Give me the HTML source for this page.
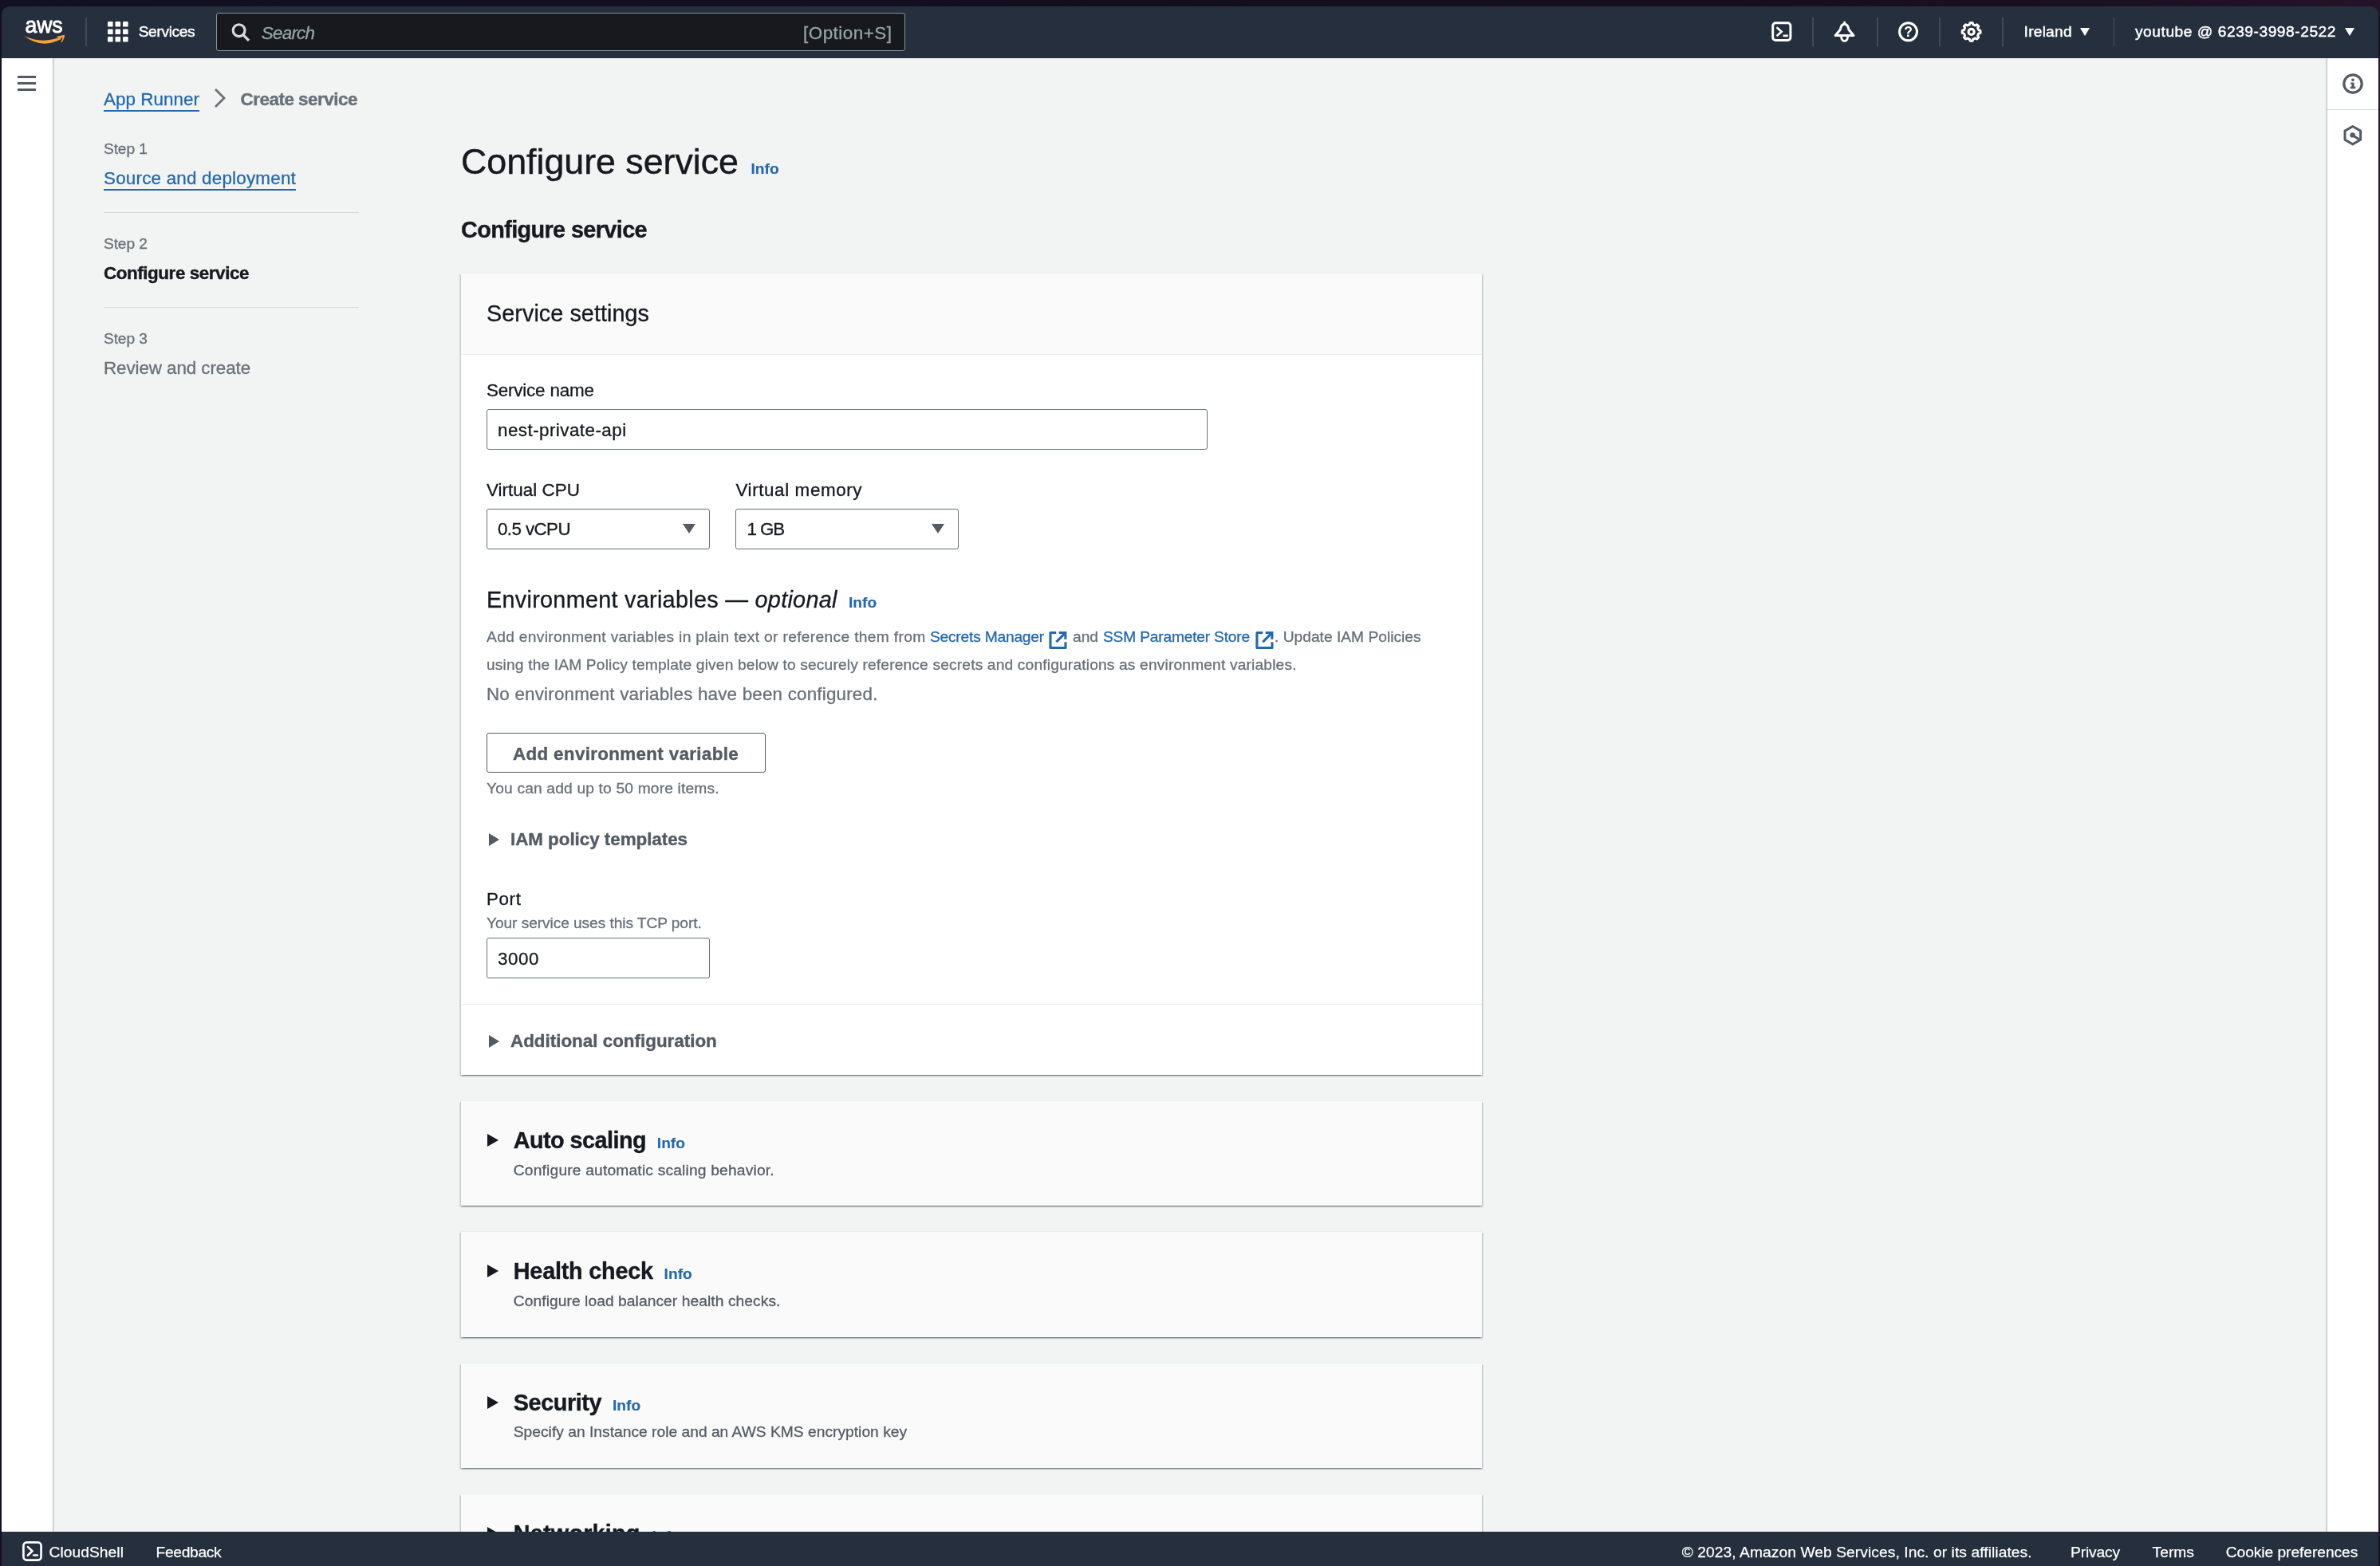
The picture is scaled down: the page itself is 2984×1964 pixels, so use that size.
<!DOCTYPE html>
<html lang="en">
<head>
<meta charset="utf-8">
<title>App Runner - Create service</title>
<style>
*{box-sizing:border-box;margin:0;padding:0}
html,body{width:2984px;height:1964px;overflow:hidden}
body{background:linear-gradient(90deg,#121022 0%,#130e1e 50%,#170e1e 75%,#1c1023 90%,#241429 100%);font-family:"Liberation Sans",Arial,sans-serif;color:#16191f;font-size:22.4px;position:relative}
#win{will-change:transform;position:absolute;left:0;top:0;width:2984px;height:1964px;clip-path:inset(8px 2px 0 2px round 10px 10px 0 0);background:#f2f3f3;overflow:hidden}
.t{position:absolute;left:calc(var(--x)*1px);top:calc(var(--cy)*1px - 20px);line-height:40px;white-space:nowrap}
.abs{position:absolute}
.t{-webkit-text-stroke:0.3px}
.b{font-weight:bold;-webkit-text-stroke:0.4px}
.info{-webkit-text-stroke:0.15px}
.f19{font-size:19.2px}
.f22{font-size:22.4px}
.f25{font-size:22.4px}
.f28{font-size:28.8px}
.gray{color:#687078}
.dgray{color:#545b64}
.link{color:#2368b1}
.info{color:#2368b1;font-weight:bold;font-size:19.2px}
/* nav */
#nav{position:absolute;left:0;top:0;width:2984px;height:73px;border-bottom:1px solid #222d3b;background:#252f3d}
#nav .t{color:#fff;font-size:19.2px;-webkit-text-stroke:0.45px #fff}
.vsep{position:absolute;top:22px;width:2px;height:36px;background:#444a55}
#search{position:absolute;left:271px;top:16px;width:864px;height:48px;border:1px solid #879596;border-radius:3px;background:#18191e}
/* side strips */
#lstrip{position:absolute;left:0;top:73px;width:66px;height:1848px;background:#fff;box-shadow:1px 0 2px rgba(0,28,36,.3)}
#rstrip{position:absolute;left:2918px;top:73px;width:66px;height:1848px;background:#fff;box-shadow:-1px 0 2px rgba(0,28,36,.3)}
#foot{position:absolute;left:0;top:1921px;width:2984px;height:43px;background:#252f3d}
#foot .t{color:#fff;font-size:19.2px;-webkit-text-stroke:0.25px #fff}
/* cards */
.card{position:absolute;left:578px;width:1280px;background:#fff;border-top:1px solid #eaeded;box-shadow:0 1.6px 1.6px 0 rgba(0,28,36,.3),1.6px 1.6px 1.6px 0 rgba(0,28,36,.15),-1.6px 1.6px 1.6px 0 rgba(0,28,36,.15)}
.card.hd{background:#fafafa}
.inp{position:absolute;height:51px;border:1px solid #687078;border-radius:3px;background:#fff}
.tri{position:absolute;width:0;height:0;border-style:solid}
.hr{position:absolute;height:1px;background:#eaeded}
</style>
<style id="ls">
#bc1{letter-spacing:0.050px}
#bc2{letter-spacing:-0.473px}
#st1{letter-spacing:-0.131px}
#st2{letter-spacing:-0.131px}
#st3{letter-spacing:-0.131px}
#st1n{letter-spacing:0.214px}
#st2n{letter-spacing:-0.420px}
#st3n{letter-spacing:-0.085px}
#h1{letter-spacing:-0.034px}
#h2{letter-spacing:-0.604px}
#c1h{letter-spacing:0.046px}
#l1{letter-spacing:-0.184px}
#v1{letter-spacing:0.454px}
#l2{letter-spacing:0.040px}
#l3{letter-spacing:0.617px}
#v2{letter-spacing:-0.604px}
#v3{letter-spacing:-1.133px}
#envh{letter-spacing:0.285px}
#d1a{letter-spacing:0.330px}
#d1b{letter-spacing:-0.201px}
#d1c{letter-spacing:-0.005px}
#d1d{letter-spacing:-0.194px}
#d1e{letter-spacing:0.008px}
#d2{letter-spacing:0.159px}
#noenv{letter-spacing:0.193px}
#btn{letter-spacing:0.334px}
#cap{letter-spacing:0.174px}
#iam{letter-spacing:-0.036px}
#l4{letter-spacing:0.605px}
#l4d{letter-spacing:-0.093px}
#v4{letter-spacing:0.547px}
#addc{letter-spacing:0.003px}
#c2h{letter-spacing:-0.550px}
#c2d{letter-spacing:0.190px}
#c3h{letter-spacing:-0.223px}
#c3d{letter-spacing:0.078px}
#c4h{letter-spacing:-0.420px}
#c4d{letter-spacing:0.023px}
#c5h{letter-spacing:0.200px}
#nsv{letter-spacing:-0.372px}
#nsq{letter-spacing:-0.742px}
#nso{letter-spacing:0.508px}
#nir{letter-spacing:0.218px}
#nac{letter-spacing:0.531px}
#f1{letter-spacing:0.069px}
#f2{letter-spacing:-0.321px}
#f3{letter-spacing:0.083px}
#f4{letter-spacing:-0.129px}
#f5{letter-spacing:0.033px}
#f6{letter-spacing:-0.055px}
</style>
</head>
<body>
<div id="win">

<!-- ============ MAIN CONTENT ============ -->
<div id="main">
<!-- breadcrumb -->
<a class="t link f22" id="bc1" style="--x:130;--cy:125;text-decoration:underline;text-underline-offset:6px;text-decoration-thickness:1.6px">App Runner</a>
<svg class="abs" style="left:266px;top:109px" width="20" height="28" viewBox="0 0 20 28"><path d="M4 3 L15 14 L4 25" fill="none" stroke="#687078" stroke-width="2.8" stroke-linejoin="miter"/></svg>
<span class="t b f22 gray" id="bc2" style="--x:301.5;--cy:125">Create service</span>

<!-- wizard steps -->
<span class="t f19 gray" id="st1" style="--x:130;--cy:186.5">Step 1</span>
<a class="t link f22" id="st1n" style="--x:130;--cy:224;text-decoration:underline;text-underline-offset:6px;text-decoration-thickness:1.6px">Source and deployment</a>
<div class="hr" style="left:130px;top:265.5px;width:320px;background:#d5dbdb"></div>
<span class="t f19 gray" id="st2" style="--x:130;--cy:305.5">Step 2</span>
<span class="t b f22" id="st2n" style="--x:130;--cy:343">Configure service</span>
<div class="hr" style="left:130px;top:384.5px;width:320px;background:#d5dbdb"></div>
<span class="t f19 gray" id="st3" style="--x:130;--cy:424.6">Step 3</span>
<span class="t f22 gray" id="st3n" style="--x:130;--cy:461.5">Review and create</span>

<!-- headings -->
<h1 class="t" id="h1" style="--x:578;--cy:203;font-size:44.8px;font-weight:normal;line-height:60px;top:171.5px;-webkit-text-stroke:0.45px">Configure service</h1>
<a class="t info" id="h1i" style="--x:941.5;--cy:212">Info</a>
<h2 class="t b f28" id="h2" style="--x:578;--cy:287.5">Configure service</h2>

<!-- card 1 : Service settings -->
<div class="card" style="top:342px;height:1006px"></div>
<div class="abs" style="left:578px;top:343px;width:1280px;height:102px;background:#fafafa;border-bottom:1px solid #eaeded"></div>
<span class="t f28" id="c1h" style="--x:610;--cy:392.5">Service settings</span>

<span class="t f25" id="l1" style="--x:610;--cy:490">Service name</span>
<div class="inp" style="left:610px;top:513px;width:904px"></div>
<span class="t f22" id="v1" style="--x:624;--cy:539.5">nest-private-api</span>

<span class="t f25" id="l2" style="--x:610;--cy:614.5">Virtual CPU</span>
<div class="inp" style="left:610px;top:638px;width:280px"></div>
<span class="t f22" id="v2" style="--x:624;--cy:664">0.5 vCPU</span>
<div class="tri" style="left:855.5px;top:657px;border-width:12.5px 8px 0 8px;border-color:#545b64 transparent transparent transparent"></div>

<span class="t f25" id="l3" style="--x:922.4;--cy:614.5">Virtual memory</span>
<div class="inp" style="left:922px;top:638px;width:280px"></div>
<span class="t f22" id="v3" style="--x:936.5;--cy:664">1 GB</span>
<div class="tri" style="left:1167.5px;top:657px;border-width:12.5px 8px 0 8px;border-color:#545b64 transparent transparent transparent"></div>

<span class="t f28" id="envh" style="--x:610;--cy:752">Environment variables — <i>optional</i></span>
<a class="t info" id="envi" style="--x:1064;--cy:755.5">Info</a>

<span class="t f19 gray" id="d1a" style="--x:610;--cy:798.5">Add environment variables in plain text or reference them from</span>
<a class="t f19 link" id="d1b" style="--x:1165.9;--cy:798.5">Secrets Manager</a>
<svg class="abs ext" style="left:1315px;top:790.9px" width="23.4" height="23.4" viewBox="0 0 24 24"><path d="M9.5 2.5 H2 V22 H21.5 V14.5" fill="none" stroke="#2368b1" stroke-width="3.2" stroke-linejoin="round"/><path d="M13 2.6 H21.4 V11" fill="none" stroke="#2368b1" stroke-width="3.2"/><path d="M21 3 L9.6 14.4" fill="none" stroke="#2368b1" stroke-width="3.2"/></svg>
<span class="t f19 gray" id="d1c" style="--x:1345;--cy:798.5">and</span>
<a class="t f19 link" id="d1d" style="--x:1383;--cy:798.5">SSM Parameter Store</a>
<svg class="abs ext" style="left:1574px;top:790.9px" width="23.4" height="23.4" viewBox="0 0 24 24"><path d="M9.5 2.5 H2 V22 H21.5 V14.5" fill="none" stroke="#2368b1" stroke-width="3.2" stroke-linejoin="round"/><path d="M13 2.6 H21.4 V11" fill="none" stroke="#2368b1" stroke-width="3.2"/><path d="M21 3 L9.6 14.4" fill="none" stroke="#2368b1" stroke-width="3.2"/></svg>
<span class="t f19 gray" id="d1e" style="--x:1598;--cy:798.5">. Update IAM Policies</span>
<span class="t f19 gray" id="d2" style="--x:610;--cy:833.8">using the IAM Policy template given below to securely reference secrets and configurations as environment variables.</span>
<span class="t f22 gray" id="noenv" style="--x:610;--cy:870.5">No environment variables have been configured.</span>

<div class="abs" style="left:610px;top:919px;width:350px;height:50px;border:1px solid #545b64;border-radius:3px;background:#fff"></div>
<span class="t b f22 dgray" id="btn" style="--x:643;--cy:945.5">Add environment variable</span>
<span class="t f19 gray" id="cap" style="--x:610;--cy:988.8">You can add up to 50 more items.</span>

<div class="tri" style="left:613px;top:1045px;border-width:8px 0 8px 13px;border-color:transparent transparent transparent #545b64"></div>
<span class="t b f22 dgray" id="iam" style="--x:640;--cy:1053">IAM policy templates</span>

<span class="t f25" id="l4" style="--x:610;--cy:1128">Port</span>
<span class="t f19 gray" id="l4d" style="--x:610;--cy:1158.4">Your service uses this TCP port.</span>
<div class="inp" style="left:610px;top:1176px;width:280px"></div>
<span class="t f22" id="v4" style="--x:624;--cy:1202.5">3000</span>

<div class="hr" style="left:578px;top:1259px;width:1280px"></div>
<div class="tri" style="left:613px;top:1298px;border-width:8px 0 8px 13px;border-color:transparent transparent transparent #545b64"></div>
<span class="t b f22 dgray" id="addc" style="--x:640;--cy:1306">Additional configuration</span>

<!-- card 2 -->
<div class="card hd" style="top:1380px;height:132px"></div>
<div class="tri" style="left:611px;top:1421.5px;border-width:8.2px 0 8.2px 14px;border-color:transparent transparent transparent #16191f"></div>
<span class="t b f28" id="c2h" style="--x:643.8;--cy:1429.7">Auto scaling</span>
<a class="t info" id="c2i" style="--x:823.8;--cy:1434">Info</a>
<span class="t f19 dgray" id="c2d" style="--x:643.8;--cy:1468">Configure automatic scaling behavior.</span>

<!-- card 3 -->
<div class="card hd" style="top:1544px;height:133px"></div>
<div class="tri" style="left:611px;top:1585.5px;border-width:8.2px 0 8.2px 14px;border-color:transparent transparent transparent #16191f"></div>
<span class="t b f28" id="c3h" style="--x:643.8;--cy:1593.7">Health check</span>
<a class="t info" id="c3i" style="--x:832.6;--cy:1598">Info</a>
<span class="t f19 dgray" id="c3d" style="--x:643.8;--cy:1632">Configure load balancer health checks.</span>

<!-- card 4 -->
<div class="card hd" style="top:1709px;height:132px"></div>
<div class="tri" style="left:611px;top:1750.5px;border-width:8.2px 0 8.2px 14px;border-color:transparent transparent transparent #16191f"></div>
<span class="t b f28" id="c4h" style="--x:643.8;--cy:1758.7">Security</span>
<a class="t info" id="c4i" style="--x:768;--cy:1763">Info</a>
<span class="t f19 dgray" id="c4d" style="--x:643.8;--cy:1796">Specify an Instance role and an AWS KMS encryption key</span>

<!-- card 5 -->
<div class="card hd" style="top:1873px;height:132px"></div>
<div class="tri" style="left:611px;top:1914.5px;border-width:8.2px 0 8.2px 14px;border-color:transparent transparent transparent #16191f"></div>
<span class="t b f28" id="c5h" style="--x:643.8;--cy:1922.7">Networking</span>
<a class="t info" id="c5i" style="--x:817.4;--cy:1927">Info</a>
<span class="t f19 dgray" id="c5d" style="--x:643.8;--cy:1960">Configure the way your service communicates with other applications, services, and resources.</span>
</div>

<!-- ============ STRIPS ============ -->
<div id="lstrip"><svg class="abs" style="left:22px;top:21px" width="24" height="22" viewBox="0 0 24 22"><path d="M0 2.5 H23 M0 10.5 H23 M0 18.5 H23" stroke="#545b64" stroke-width="3"/></svg></div>
<div id="rstrip"><svg class="abs" style="left:16.8px;top:16.6px" width="30" height="30" viewBox="0 0 30 30"><circle cx="15" cy="15" r="11.2" fill="none" stroke="#545b64" stroke-width="3.2"/><rect x="13.4" y="8.6" width="3.2" height="3.2" fill="#545b64"/><path d="M12.2 13.4 H16.6 V18.6 H18.2 V21.2 H11.8 V18.6 H13.6 V15.8 H12.2 Z" fill="#545b64"/></svg>
<div class="hr" style="left:0;top:64px;width:66px;background:#d5dbdb"></div>
<svg class="abs" style="left:0;top:0" width="66" height="140" viewBox="0 0 66 140"><path d="M31.80 85.50 L41.60 91.10 L41.60 102.30 L31.80 107.90 L22.00 102.30 L22.00 91.10 Z" fill="none" stroke="#545b64" stroke-width="3" stroke-linejoin="round"/><circle cx="31.60" cy="96.40" r="3.2" fill="#545b64"/><path d="M31.80 96.70 L39.80 101.70" stroke="#545b64" stroke-width="3"/></svg></div>

<!-- ============ NAV ============ -->
<div id="nav">
<div id="search"></div>
<svg class="abs" style="left:0;top:0" width="2984" height="72" viewBox="0 0 2984 72">
<!-- aws logo -->
<text x="31.4" y="40.7" font-family="Liberation Sans, Arial, sans-serif" font-size="27.5" fill="#fff" stroke="#fff" stroke-width="0.8" textLength="47.2" lengthAdjust="spacingAndGlyphs">aws</text>
<path d="M30 45 Q52 62 76.8 49 L75.8 46.6 Q52 55.4 30 45 Z" fill="#f6a236"/>
<path d="M71.2 45.7 L81 43.8 Q81.2 48.5 77.2 53.3 L76.2 52.6 Q78.6 49 78.2 47.4 Q75 46.8 71.6 47.3 Z" fill="#f6a236"/>
<!-- grid -->
<g fill="#fff">
<rect x="135" y="27" width="6.6" height="6.6" rx="1.2"/><rect x="144.5" y="27" width="6.6" height="6.6" rx="1.2"/><rect x="154" y="27" width="6.6" height="6.6" rx="1.2"/>
<rect x="135" y="36.5" width="6.6" height="6.6" rx="1.2"/><rect x="144.5" y="36.5" width="6.6" height="6.6" rx="1.2"/><rect x="154" y="36.5" width="6.6" height="6.6" rx="1.2"/>
<rect x="135" y="46" width="6.6" height="6.6" rx="1.2"/><rect x="144.5" y="46" width="6.6" height="6.6" rx="1.2"/><rect x="154" y="46" width="6.6" height="6.6" rx="1.2"/>
</g>
<!-- search icon -->
<circle cx="299.6" cy="38.2" r="7.4" fill="none" stroke="#d5dbdb" stroke-width="3.1"/><path d="M305 43.8 L312 50.8" stroke="#d5dbdb" stroke-width="3.3"/>
<!-- cloudshell -->
<rect x="2222.7" y="28.7" width="22.2" height="21.8" rx="3.6" fill="none" stroke="#fff" stroke-width="3"/>
<path d="M2227.6 34.2 L2233.6 39.7 L2227.6 45.2" fill="none" stroke="#fff" stroke-width="2.7"/><path d="M2235.6 44.8 H2241.8" stroke="#fff" stroke-width="2.7"/>
<!-- bell -->
<path d="M2301.2 44.5 L2307.2 37.3 C2308 35,2308 33.5,2308.8 32.5 C2309.8 30.8,2311 30.2,2312.6 30.2 C2314.2 30.2,2315.4 30.8,2316.4 32.5 C2317.2 33.5,2317.2 35,2318 37.3 L2324 44.5 Z" fill="none" stroke="#fff" stroke-width="3" stroke-linejoin="round"/>
<path d="M2312.6 27.8 V30" stroke="#fff" stroke-width="2.8" stroke-linecap="round"/>
<path d="M2308.6 46 C2308.6 53.2,2316.6 53.2,2316.6 46" fill="none" stroke="#fff" stroke-width="2.8"/>
<!-- help -->
<circle cx="2392.5" cy="39.8" r="11" fill="none" stroke="#fff" stroke-width="3"/>
<text x="2392.5" y="46.2" text-anchor="middle" font-family="Liberation Sans, Arial, sans-serif" font-weight="bold" font-size="17.5" fill="#fff">?</text>
<!-- gear -->
<path d="M2469.41 30.76 L2470.07 28.50 L2473.13 28.50 L2473.79 30.76 L2476.51 31.89 L2478.58 30.76 L2480.74 32.92 L2479.61 34.99 L2480.74 37.71 L2483.00 38.37 L2483.00 41.43 L2480.74 42.09 L2479.61 44.81 L2480.74 46.88 L2478.58 49.04 L2476.51 47.91 L2473.79 49.04 L2473.13 51.30 L2470.07 51.30 L2469.41 49.04 L2466.69 47.91 L2464.62 49.04 L2462.46 46.88 L2463.59 44.81 L2462.46 42.09 L2460.20 41.43 L2460.20 38.37 L2462.46 37.71 L2463.59 34.99 L2462.46 32.92 L2464.62 30.76 L2466.69 31.89 Z" fill="none" stroke="#fff" stroke-width="3" stroke-linejoin="round"/>
<circle cx="2471.6" cy="39.9" r="3.55" fill="none" stroke="#fff" stroke-width="3.1"/>
</svg>
<div class="vsep" style="left:107px"></div>
<span class="t" id="nsv" style="--x:173.7;--cy:40">Services</span>
<span class="t" id="nsq" style="--x:327.8;--cy:41.5;font-style:italic;color:#95a5a6;font-size:22.4px;-webkit-text-stroke:0.3px #95a5a6">Search</span>
<span class="t" id="nso" style="--x:1007;--cy:41.5;color:#95a5a6;font-size:22.4px;-webkit-text-stroke:0.3px #95a5a6">[Option+S]</span>
<div class="vsep" style="left:2272px"></div>
<div class="vsep" style="left:2353px"></div>
<div class="vsep" style="left:2431px"></div>
<div class="vsep" style="left:2510px"></div>
<span class="t" id="nir" style="--x:2537.6;--cy:40">Ireland</span>
<div class="tri" style="left:2608px;top:35px;border-width:10px 6.5px 0 6.5px;border-color:#fff transparent transparent transparent"></div>
<div class="vsep" style="left:2650px;width:1px;background:#4a515e"></div>
<span class="t" id="nac" style="--x:2677;--cy:40">youtube @ 6239-3998-2522</span>
<div class="tri" style="left:2939.5px;top:35px;border-width:10px 6.5px 0 6.5px;border-color:#fff transparent transparent transparent"></div>
</div>

<!-- ============ FOOTER ============ -->
<div id="foot"><svg class="abs" style="left:28px;top:11.5px" width="25" height="25" viewBox="0 0 28 28"><rect x="1.6" y="1.6" width="24.8" height="24.8" rx="4.5" fill="none" stroke="#fff" stroke-width="3"/><path d="M7.8 8 L14 13.8 L7.8 19.6" fill="none" stroke="#fff" stroke-width="3" stroke-linecap="round" stroke-linejoin="round"/><path d="M16 19.6 H21" stroke="#fff" stroke-width="3" stroke-linecap="round"/></svg>
<span class="t" id="f1" style="--x:61.5;--cy:25.5">CloudShell</span>
<span class="t" id="f2" style="--x:195.6;--cy:25.5">Feedback</span>
<span class="t" id="f3" style="--x:2108.7;--cy:25.5">© 2023, Amazon Web Services, Inc. or its affiliates.</span>
<span class="t" id="f4" style="--x:2596;--cy:25.5">Privacy</span>
<span class="t" id="f5" style="--x:2698.6;--cy:25.5">Terms</span>
<span class="t" id="f6" style="--x:2790.8;--cy:25.5">Cookie preferences</span></div>

</div>
<script id="fitzoom">(function(){var w=window.innerWidth||2984;if(w&&Math.abs(w-2984)>1){document.documentElement.style.zoom=w/2984;}})();</script>
</body>
</html>
